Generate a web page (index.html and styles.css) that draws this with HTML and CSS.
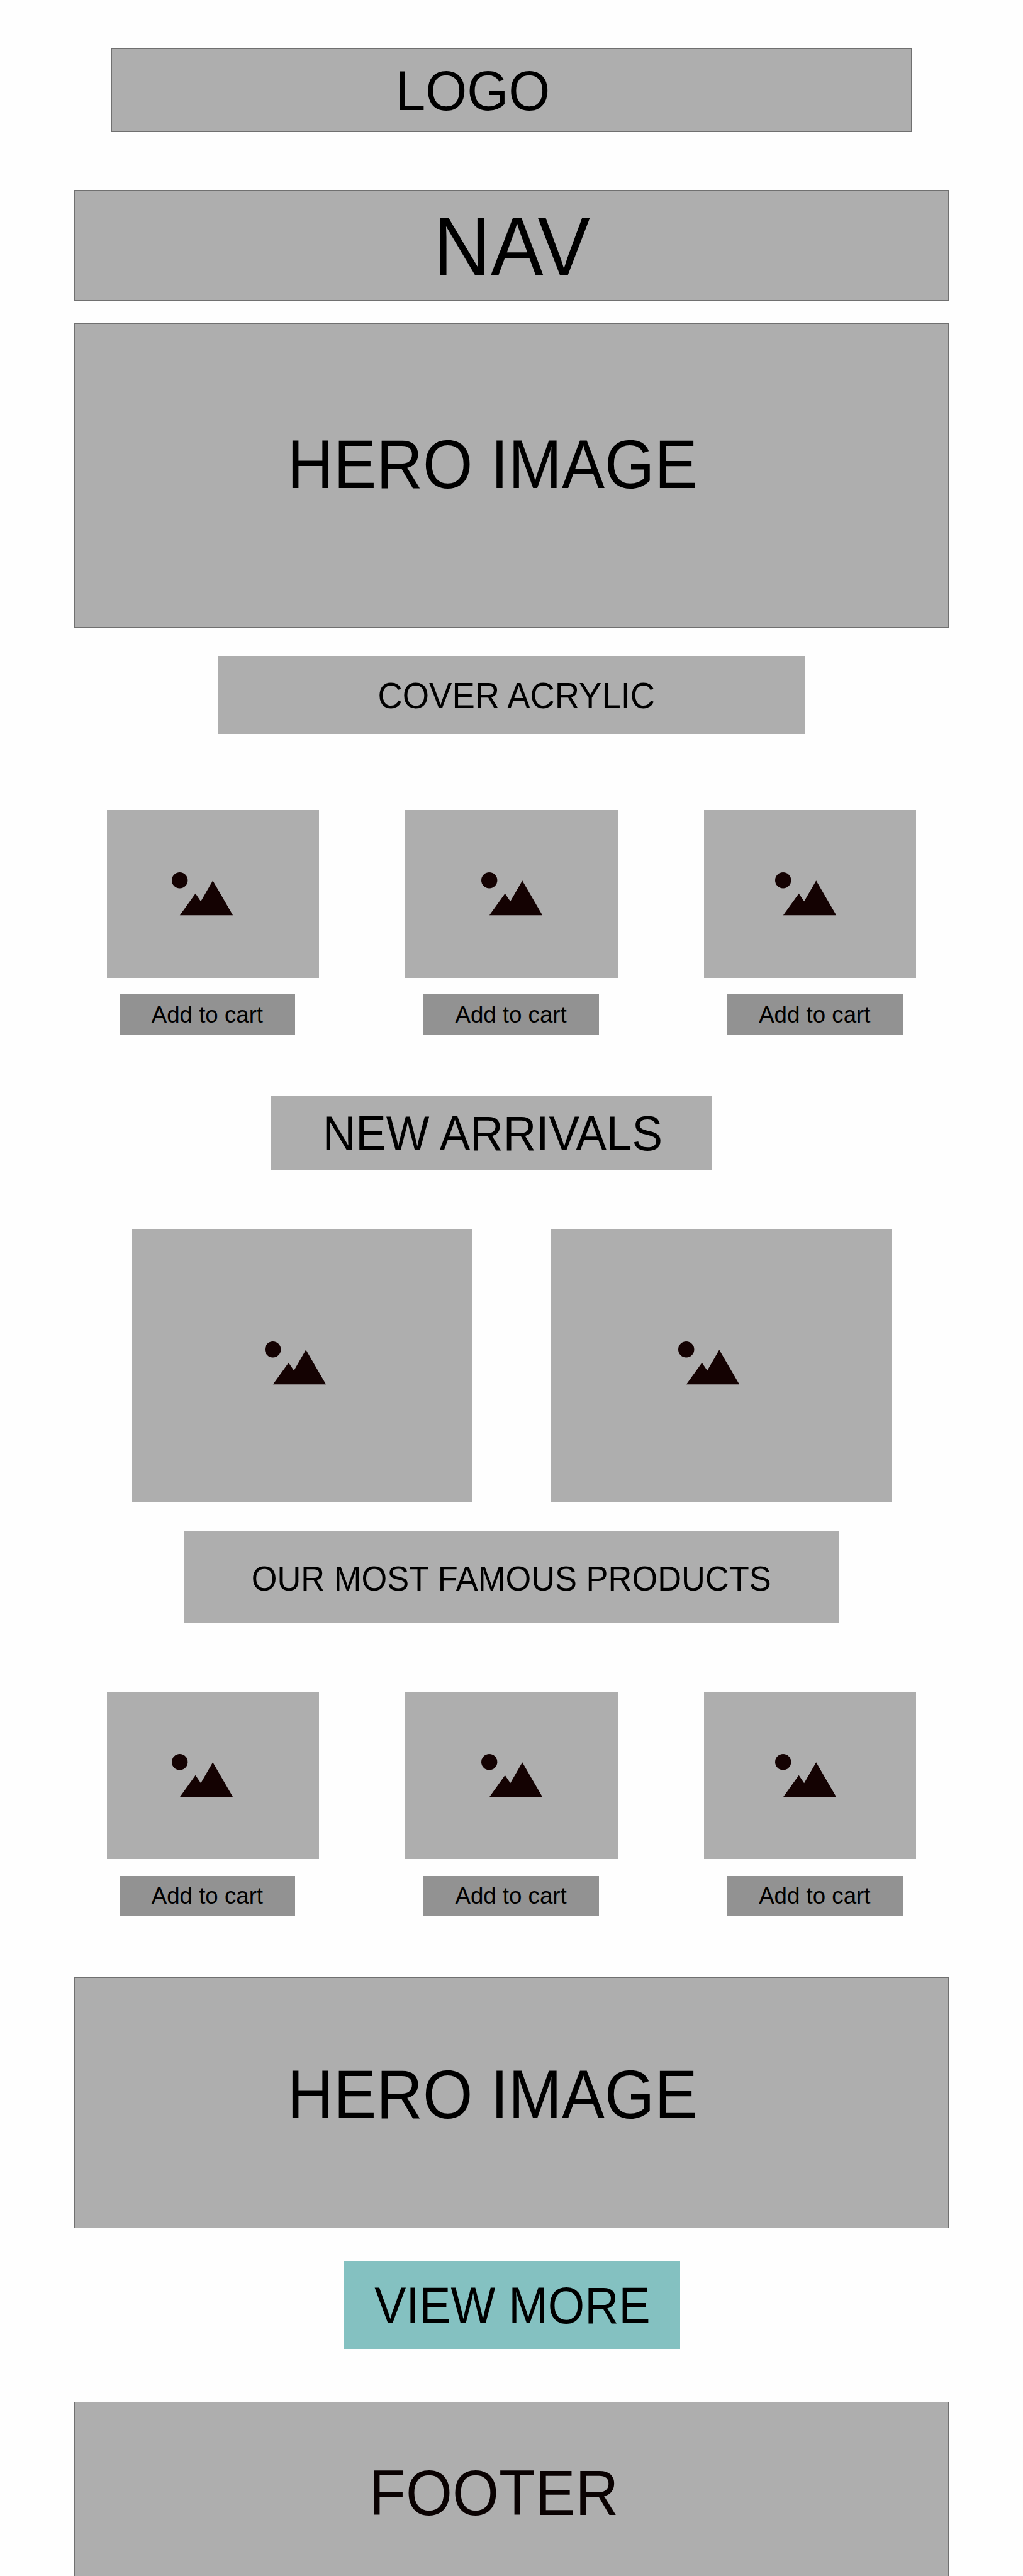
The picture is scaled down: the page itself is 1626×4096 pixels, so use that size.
FILE: index.html
```html
<!DOCTYPE html>
<html lang="en">
<head>
<meta charset="utf-8">
<title>Shop wireframe</title>
<link rel="stylesheet" href="styles.css">
</head>
<body>
<svg class="defs" aria-hidden="true">
  <symbol id="picture" viewBox="0 0 115 81">
    <circle cx="15" cy="15" r="15"/>
    <path d="M15 81 44.5 40 54.5 54.5 77 15.5 115 81Z"/>
  </symbol>
</svg>
<header class="box outlined logo"><span class="label">LOGO</span></header>
<nav class="box outlined nav"><span class="label">NAV</span></nav>
<section class="box outlined hero"><span class="label">HERO IMAGE</span></section>
<h2 class="box cover"><span class="label">COVER ACRYLIC</span></h2>
<section class="products">
  <div class="cards">
    <div class="card"><svg class="icon"><use href="#picture"/></svg></div>
    <div class="card"><svg class="icon"><use href="#picture"/></svg></div>
    <div class="card"><svg class="icon"><use href="#picture"/></svg></div>
  </div>
  <div class="buttons">
    <button class="box cart"><span class="label">Add to cart</span></button>
    <button class="box cart"><span class="label">Add to cart</span></button>
    <button class="box cart"><span class="label">Add to cart</span></button>
  </div>
</section>
<h2 class="box arrivals"><span class="label">NEW ARRIVALS</span></h2>
<section class="features">
  <div class="feature"><svg class="icon"><use href="#picture"/></svg></div>
  <div class="feature"><svg class="icon"><use href="#picture"/></svg></div>
</section>
<h2 class="box famous"><span class="label">OUR MOST FAMOUS PRODUCTS</span></h2>
<section class="products products-famous">
  <div class="cards">
    <div class="card"><svg class="icon"><use href="#picture"/></svg></div>
    <div class="card"><svg class="icon"><use href="#picture"/></svg></div>
    <div class="card"><svg class="icon"><use href="#picture"/></svg></div>
  </div>
  <div class="buttons">
    <button class="box cart"><span class="label">Add to cart</span></button>
    <button class="box cart"><span class="label">Add to cart</span></button>
    <button class="box cart"><span class="label">Add to cart</span></button>
  </div>
</section>
<section class="box outlined hero hero-small"><span class="label">HERO IMAGE</span></section>
<button class="box more"><span class="label">VIEW MORE</span></button>
<footer class="box outlined footer"><span class="label">FOOTER</span></footer>
</body>
</html>
```
FILE: styles.css
```css
/* --u is one design unit; the design is 1920 units wide. */
:root { --u: 0.846875px; background: #fefefe; }
* { box-sizing: border-box; }
body {
  margin: 0;
  width: 1626px;
  height: 4096px;
  overflow: hidden;
  display: flex;
  flex-direction: column;
  align-items: flex-start;
  font-family: "Liberation Sans", Arial, sans-serif;
  color: #000;
}
.defs { display: none; }

/* Each box sets its size (--w, --h), its text's left edge (--x),
   baseline (--base), font size (--fs) and vertical stretch (--sy). */
.box {
  flex: none;
  margin: 0;
  border: 0;
  border-radius: 0;
  width: calc(var(--w) * var(--u));
  height: calc(var(--h) * var(--u));
  padding: calc((var(--base) - 0.8465 * var(--fs)) * var(--u)) 0 0 calc(var(--x) * var(--u));
  display: flex;
  align-items: flex-start;
  justify-content: flex-start;
  background: #aeaeae;
  font-family: inherit;
  font-weight: 400;
  font-size: calc(var(--fs) * var(--u));
  line-height: 1;
  color: inherit;
  text-align: left;
}
.outlined { box-shadow: inset 0 0 0 1px #707070; }
.label {
  display: block;
  white-space: nowrap;
  transform: scaleY(var(--sy));
  transform-origin: 0 0.8465em;
}

.logo { --w: 1502; --h: 157; --x: 533.8; --base: 116.3; --fs: 100.2; --sy: 1.059; margin: calc(91 * var(--u)) 0 0 calc(209 * var(--u)); }
.nav { --w: 1641; --h: 208; --x: 673.7; --base: 161.4; --fs: 148.8; --sy: 1.065; margin: calc(109 * var(--u)) 0 0 calc(139.5 * var(--u)); }
.hero { --w: 1641; --h: 571; --x: 399.6; --base: 310; --fs: 120.5; --sy: 1.073; margin: calc(42 * var(--u)) 0 0 calc(139.5 * var(--u)); }
.cover { --w: 1104; --h: 146; --x: 301; --base: 99.3; --fs: 64.3; --sy: 1.063; margin: calc(54 * var(--u)) 0 0 calc(408 * var(--u)); }

.products { margin: calc(143 * var(--u)) 0 0 calc(201 * var(--u)); }
.cards { display: flex; gap: calc(162 * var(--u)); }
.card { width: calc(398 * var(--u)); height: calc(315 * var(--u)); background: #aeaeae; padding: calc(117 * var(--u)) 0 0 calc(121 * var(--u)); }
.card:nth-child(2) { padding-left: calc(142 * var(--u)); }
.card:nth-child(3) { padding-left: calc(134 * var(--u)); }
.icon { display: block; width: calc(115 * var(--u)); height: calc(81 * var(--u)); fill: #140202; }
.buttons { display: flex; gap: calc(241 * var(--u)); margin: calc(31 * var(--u)) 0 0 calc(24 * var(--u)); }
.cart { --w: 329; --h: 75; --x: 59.3; --base: 53.8; --fs: 43.3; --sy: 1.03; background: #929292; }

.arrivals { --w: 827; --h: 140; --x: 96.5; --base: 103.8; --fs: 85.9; --sy: 1.066; margin: calc(115 * var(--u)) 0 0 calc(509 * var(--u)); }
.features { display: flex; gap: calc(149 * var(--u)); margin: calc(110 * var(--u)) 0 0 calc(248 * var(--u)); }
.feature { width: calc(638 * var(--u)); height: calc(513 * var(--u)); background: #aeaeae; padding: calc(212 * var(--u)) 0 0 calc(249 * var(--u)); }
.feature:nth-child(2) { padding-left: calc(237.5 * var(--u)); }
.famous { --w: 1230; --h: 173; --x: 127; --base: 111.8; --fs: 61.9; --sy: 1.057; margin: calc(55 * var(--u)) 0 0 calc(345 * var(--u)); }
.products-famous { margin-top: calc(128 * var(--u)); }

.hero-small { --h: 472; --base: 265.8; margin-top: calc(115 * var(--u)); }
.more { --w: 631; --h: 165; --x: 58; --base: 117.8; --fs: 88.7; --sy: 1.08; background: #84c1c1; margin: calc(61 * var(--u)) 0 0 calc(645 * var(--u)); }
.footer { --w: 1641; --h: 340; --x: 553.5; --base: 212.8; --fs: 112.3; --sy: 1.08; color: #0a0202; margin: calc(100 * var(--u)) 0 0 calc(139.5 * var(--u)); }
```
